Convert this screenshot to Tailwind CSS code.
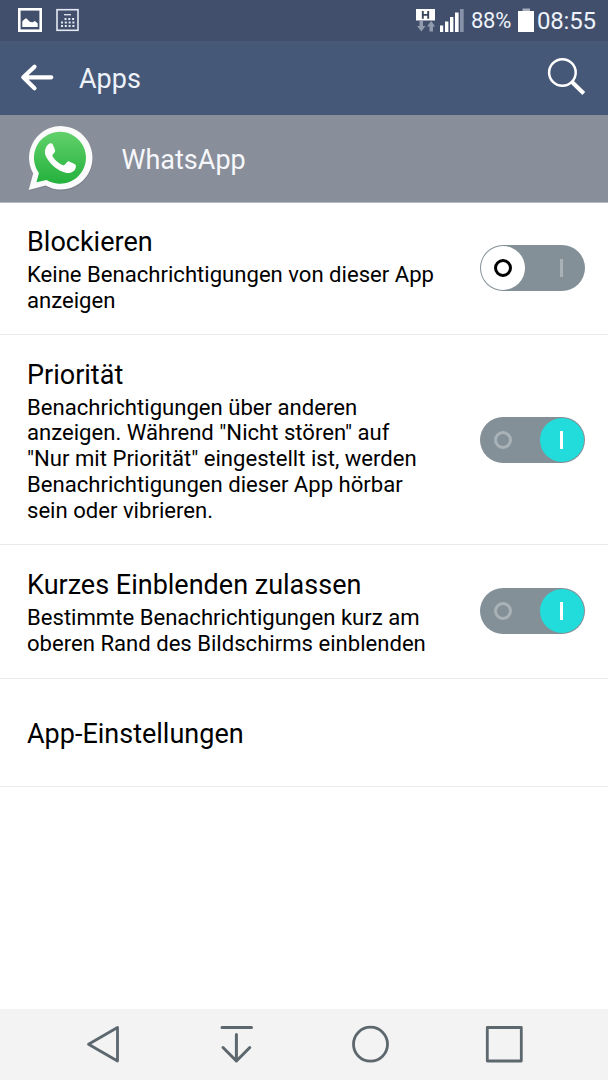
<!DOCTYPE html>
<html lang="de">
<head>
    <meta charset="UTF-8">
    <meta name="viewport" content="width=device-width, initial-scale=1.0">
    <title>WhatsApp - Apps</title>
    <script src="https://cdn.jsdelivr.net/npm/@tailwindcss/browser@4"></script>
</head>
<body class="bg-white font-[Roboto,sans-serif] text-black w-[608px] h-[1080px] flex flex-col overflow-hidden">

    <!-- Status bar -->
    <div class="h-[41px] shrink-0 bg-[#414f6c] text-[#eef2fa] flex items-center justify-between pl-[18px] pr-[12px]">
        <svg class="w-[62px] h-[41px]" viewBox="18 0 62 41" fill="none">
            <rect x="19.3" y="9.3" width="21.4" height="21.4" stroke="#fff" stroke-width="2.6"/>
            <path d="M22.300 27V21.300l2.500-2.300 1.500-.8 2.200 2.300 1.800 1.500 2.500.2 2-1.200 2 1.500.9 1V27z" fill="#fff"/>
            <rect x="57" y="9.700" width="21" height="20.600" stroke="#e4e9f3" stroke-width="1.600"/>
            <path d="M64 14.700h7" stroke="#e4e9f3" stroke-width="1.300"/>
            <path d="M64.500 19h10M61 22.500h13.500M61 26h13.500" stroke="#e4e9f3" stroke-width="2" stroke-dasharray="2 1.800"/>
        </svg>
        <div class="flex items-center">
            <svg class="w-[50px] h-[41px] mr-[5px]" viewBox="416 0 50 41" fill="none">
                <path d="M416 9h19v11.500h-19z" fill="#fff"/>
                <path d="M422.800 11v7.800M428.200 11v7.800M422.500 14.900h6" stroke="#39435a" stroke-width="1.900"/>
                <path d="M419.500 21h3.500v5h2.500l-4.200 5.500-4.200-5.500h2.400zM429.500 31.500h3.500v-5h2.200l-4-5.500-4.200 5.500h2.500z" fill="#929bad"/>
                <path d="M440 25.500h3.200V32H440zM445 21.500h3.400V32H445zM450 17h3.400v15H450zM455 12.500h3.600V32H455z" fill="#fff"/>
                <path d="M460 9h3.700v23H460z" fill="#8791a8"/>
            </svg>
            <span class="text-[22px] leading-[42px] mt-px w-[41px] whitespace-nowrap tracking-[-0.3px]">88%</span>
            <svg class="w-[16px] h-[41px] ml-[6px] mr-[3px]" viewBox="518 0 16 41">
                <path d="M522.500 8.500h7.500V11h-7.500z" fill="#a7aebd"/>
                <path d="M518 11h16v21h-16z" fill="#fff"/>
            </svg>
            <span class="text-[24px] leading-[43px] mt-[2px] w-[59px] whitespace-nowrap tracking-[-0.2px]">08:55</span>
        </div>
    </div>

    <!-- Title bar -->
    <header class="h-[74px] shrink-0 bg-[#465878] text-[#eef2fb] flex items-center pl-[20px] pr-[22px]">
        <svg class="w-[35px] h-[74px]" viewBox="20 41 35 74" fill="none" stroke="#fff" stroke-width="4.200" stroke-linecap="round" stroke-linejoin="round">
            <path d="M51.300 77.300H23.500M34.500 66.700L23.300 77.300l11.200 11"/>
        </svg>
        <h1 class="ml-[24px] mt-[2px] text-[27px] leading-[32px] grow">Apps</h1>
        <svg class="w-[39px] h-[74px]" viewBox="547 41 39 74" fill="none" stroke="#fff">
            <circle cx="562.400" cy="72.500" r="13.300" stroke-width="2.500"/>
            <path d="M572 82l11.800 11.500" stroke-width="4"/>
        </svg>
    </header>

    <!-- App banner -->
    <div class="h-[88px] shrink-0 bg-[#888e9a] border-b border-[#b5b9c1] text-[#f6f7fa] flex items-center pl-[26px]">
        <svg class="w-[68px] h-[87px]" viewBox="26 115 68 87">
            <defs>
                <linearGradient id="green" x1="0" y1="0" x2="0" y2="1">
                    <stop offset="0" stop-color="#62d16b"/>
                    <stop offset="1" stop-color="#24b13c"/>
                </linearGradient>
            </defs>
            <path d="M29 191l4.400-16.800A31.700 31.700 0 1 1 45.500 186.500z" fill="#6f7580" opacity=".5"/>
            <path d="M28.700 190l4.500-16.500A31.700 31.700 0 1 1 45.500 185.600z" fill="#fbfbfb"/>
            <path d="M36.500 182.200l2.400-9.200A26 26 0 1 1 46.500 180z" fill="url(#green)"/>
            <path d="M49.500 143.500c.7-.5 2.200-.5 2.800.2.500.5 2.900 6.300 2.900 7 0 1.400-2.800 3.900-2.800 4.700 0 1.200 3 4.800 5.200 6.500 1.700 1.500 5.200 3.400 6.200 3.400 1.200 0 3.300-4 4.500-4 .8 0 6.300 2.700 7.200 3.400.7.500.4 2.900-.2 4.200-1 2.300-4.800 4.200-7.300 4.200-3.200 0-9.500-2.800-13.500-6.100-3.600-3-7.500-8.100-8.800-11.300-1.800-4.400-.2-9.700 3.800-12.200z" fill="#fff"/>
        </svg>
        <span class="ml-[27.500px] text-[27px] leading-[32px] mt-[2px]">WhatsApp</span>
    </div>

    <!-- Settings -->
    <main class="grow flex flex-col">
        <div class="h-[132px] border-b border-[#e9e9e9] flex items-center justify-between pl-[27px] pr-[23px]">
            <div class="pt-[3px]">
                <h2 class="text-[27px] leading-[32px]">Blockieren</h2>
                <p class="mt-[4px] text-[22.100px] leading-[25.800px] whitespace-nowrap">Keine Benachrichtigungen von dieser App<br>anzeigen</p>
            </div>
            <div class="w-[105px] h-[46px] mb-[2px] rounded-full bg-[#849097] flex items-center justify-between pl-px pr-[22px]">
                <div class="size-[44px] rounded-full bg-white flex items-center justify-center">
                    <div class="size-[18px] rounded-full border-[3px] border-black"></div>
                </div>
                <div class="w-[3px] h-[18px] bg-[#a9b2b7]"></div>
            </div>
        </div>

        <div class="h-[210px] border-b border-[#e9e9e9] flex items-center justify-between pl-[27px] pr-[23px]">
            <div class="pt-[3px]">
                <h2 class="text-[27px] leading-[32px]">Priorität</h2>
                <p class="mt-[4px] text-[22.100px] leading-[25.800px] whitespace-nowrap">Benachrichtigungen über anderen<br>anzeigen. Während "Nicht stören" auf<br>"Nur mit Priorität" eingestellt ist, werden<br>Benachrichtigungen dieser App hörbar<br>sein oder vibrieren.</p>
            </div>
            <div class="w-[105px] h-[46px] rounded-full bg-[#849097] flex items-center justify-between pl-[14px] pr-px">
                <div class="size-[18px] rounded-full border-[3px] border-[#a9b2b7]"></div>
                <div class="size-[44px] rounded-full bg-[#21dcda] flex items-center justify-center">
                    <div class="w-[3px] h-[18px] mr-[2px] bg-white"></div>
                </div>
            </div>
        </div>

        <div class="h-[134px] border-b border-[#e9e9e9] flex items-center justify-between pl-[27px] pr-[23px]">
            <div class="pt-[3px]">
                <h2 class="text-[27px] leading-[32px]">Kurzes Einblenden zulassen</h2>
                <p class="mt-[4px] text-[22.100px] leading-[25.800px] whitespace-nowrap">Bestimmte Benachrichtigungen kurz am<br>oberen Rand des Bildschirms einblenden</p>
            </div>
            <div class="w-[105px] h-[46px] mb-[2px] rounded-full bg-[#849097] flex items-center justify-between pl-[14px] pr-px">
                <div class="size-[18px] rounded-full border-[3px] border-[#a9b2b7]"></div>
                <div class="size-[44px] rounded-full bg-[#21dcda] flex items-center justify-center">
                    <div class="w-[3px] h-[18px] mr-[2px] bg-white"></div>
                </div>
            </div>
        </div>

        <div class="h-[108px] border-b border-[#e9e9e9] flex items-center pl-[27px]">
            <h2 class="pt-[2px] text-[27px] leading-[32px]">App-Einstellungen</h2>
        </div>
    </main>

    <!-- Navigation bar -->
    <nav class="h-[71px] shrink-0 bg-[#f3f3f3] flex items-center pl-[85px]">
        <svg class="w-[36px] h-[71px]" viewBox="85 1009 36 71" fill="none" stroke="#5d676e" stroke-width="2.800" stroke-linejoin="round">
            <path d="M117.500 1027.500v33.500L88.500 1044.200z"/>
        </svg>
        <svg class="w-[36px] h-[71px] ml-[97px]" viewBox="218 1009 36 71" fill="none" stroke="#5d676e" stroke-width="3" stroke-linecap="round" stroke-linejoin="round">
            <path d="M222 1027.500h29.500M236.400 1034.500v26.500M223 1047.500l13.400 13.500 13.400-13.500"/>
        </svg>
        <svg class="w-[38px] h-[71px] ml-[97px]" viewBox="351 1009 38 71" fill="none" stroke="#5d676e" stroke-width="2.800">
            <circle cx="370.500" cy="1044.200" r="17"/>
        </svg>
        <svg class="w-[40px] h-[71px] ml-[95px]" viewBox="484 1009 40 71" fill="none" stroke="#5d676e" stroke-width="2.800" stroke-linejoin="round">
            <path d="M487.300 1027.500h34V1061h-34z"/>
        </svg>
    </nav>

</body>
</html>
